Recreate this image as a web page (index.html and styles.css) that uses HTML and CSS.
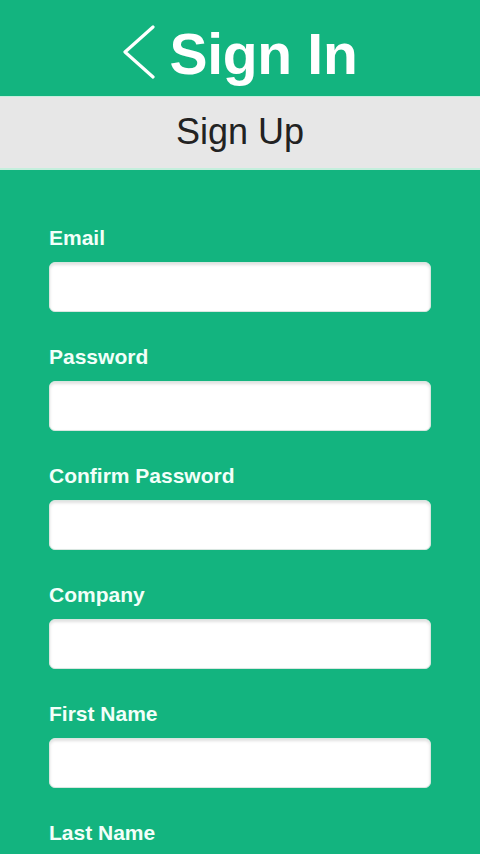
FILE: index.html
```html
<!DOCTYPE html>
<html>
<head>
<meta charset="utf-8">
<link rel="stylesheet" href="styles.css">
</head>
<body>
<header class="topbar">
  <div class="title-group">
    <svg class="back" width="34" height="54" viewBox="0 0 34 54"><polyline points="31,2 3,27 31,52" fill="none" stroke="#ffffff" stroke-width="3.2" stroke-linecap="round" stroke-linejoin="round"/></svg>
    <h1 class="title">Sign In</h1>
  </div>
</header>
<div class="band">Sign Up</div>
<form class="form">
  <label class="field"><span class="label">Email</span><input class="input" type="text"></label>
  <label class="field"><span class="label">Password</span><input class="input" type="password"></label>
  <label class="field"><span class="label">Confirm Password</span><input class="input" type="password"></label>
  <label class="field"><span class="label">Company</span><input class="input" type="text"></label>
  <label class="field"><span class="label">First Name</span><input class="input" type="text"></label>
  <label class="field"><span class="label">Last Name</span><input class="input" type="text"></label>
</form>
</body>
</html>
```
FILE: styles.css
```css
* { box-sizing: border-box; }
html, body { margin: 0; padding: 0; }
body {
  background: #13b47f;
  font-family: "Liberation Sans", Arial, Helvetica, sans-serif;
  width: 480px;
  height: 854px;
  overflow: hidden;
}
.topbar {
  height: 97px;
  display: flex;
  justify-content: center;
  align-items: center;
  border-bottom: 1px solid #c4efdd;
}
.title-group {
  display: flex;
  align-items: center;
  gap: 14px;
  margin-left: -1px;
}
.back { display: block; margin-top: 8px; }
.title {
  margin: 0;
  color: #ffffff;
  font-size: 57px;
  font-weight: 700;
  letter-spacing: -0.3px;
  line-height: 60px;
  padding-top: 12px;
}
.band {
  height: 73px;
  background: #e7e7e7;
  border-bottom: 2px solid #c4efdd;
  color: #222222;
  font-size: 36px;
  text-align: center;
  line-height: 69px;
}
.form {
  padding: 56px 49px 0;
  display: flex;
  flex-direction: column;
  gap: 33px;
}
.field {
  display: flex;
  flex-direction: column;
  gap: 12px;
}
.label {
  color: #f2fff9;
  font-size: 21px;
  font-weight: 700;
  line-height: 24px;
}
.input {
  display: block;
  width: 100%;
  height: 50px;
  margin: 0;
  border: 1px solid #d8e6e0;
  border-radius: 6px;
  background: #ffffff;
  box-shadow: inset 0 2px 3px rgba(0,0,0,0.12);
  outline: none;
}
```
